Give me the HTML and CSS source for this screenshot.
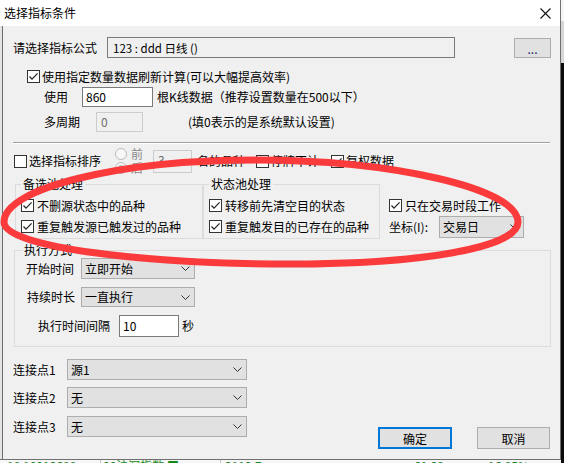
FILE: index.html
```html
<!DOCTYPE html>
<html lang="zh-CN">
<head>
<meta charset="utf-8">
<title>选择指标条件</title>
<link rel="stylesheet" href="styles.css">
</head>
<body>
<div class="screen">
  <div class="dialog">
    <div class="titlebar">
      <span class="title">选择指标条件</span>
      <svg class="close" width="11" height="11" viewBox="0 0 11 11"><path d="M0.5 0.5 L10.5 10.5 M10.5 0.5 L0.5 10.5" stroke="#111" stroke-width="1.1" fill="none"/></svg>
    </div>
    <div class="content">
      <div class="row r-formula">
        <span class="w-formula">请选择指标公式</span>
        <div class="field readonly formula">123 : ddd 日线 ()</div>
        <div class="btn dots">...</div>
      </div>

      <div class="row r-refresh">
        <span class="cb"><svg width="11" height="11" viewBox="0 0 11 11"><polyline points="1.5,5.5 4,8.2 9.6,2.4" fill="none" stroke="#222" stroke-width="1.2"/></svg></span>
        <span class="cbtext">使用指定数量数据刷新计算(可以大幅提高效率)</span>
      </div>

      <div class="row r-use">
        <span class="w-use">使用</span>
        <div class="field in-860">860</div>
        <span class="after-860">根K线数据（推荐设置数量在500以下）</span>
      </div>

      <div class="row r-multi">
        <span class="w-multi">多周期</span>
        <div class="field disabled in-0">0</div>
        <span class="after-0">(填0表示的是系统默认设置)</span>
      </div>

      <div class="sep"></div>

      <div class="row r-sort">
        <span class="cb"></span>
        <span class="cbtext">选择指标排序</span>
        <div class="radios">
          <div class="ropt"><span class="radio"></span><span class="rtext">前</span></div>
          <div class="ropt"><span class="radio on"></span><span class="rtext">后</span></div>
        </div>
        <div class="field disabled in-3">3</div>
        <span class="after-3">名的品种</span>
        <span class="cb cb-stop"></span>
        <span class="cbtext">停牌不计</span>
        <span class="cb cb-fq"><svg width="11" height="11" viewBox="0 0 11 11"><polyline points="1.5,5.5 4,8.2 9.6,2.4" fill="none" stroke="#222" stroke-width="1.2"/></svg></span>
        <span class="cbtext">复权数据</span>
      </div>

      <div class="groups">
        <fieldset class="group g1">
          <legend>备选池处理</legend>
          <div class="row grow">
            <span class="cb"><svg width="11" height="11" viewBox="0 0 11 11"><polyline points="1.5,5.5 4,8.2 9.6,2.4" fill="none" stroke="#222" stroke-width="1.2"/></svg></span>
            <span class="cbtext">不删源状态中的品种</span>
          </div>
          <div class="row grow">
            <span class="cb"><svg width="11" height="11" viewBox="0 0 11 11"><polyline points="1.5,5.5 4,8.2 9.6,2.4" fill="none" stroke="#222" stroke-width="1.2"/></svg></span>
            <span class="cbtext">重复触发源已触发过的品种</span>
          </div>
        </fieldset>
        <fieldset class="group g2">
          <legend>状态池处理</legend>
          <div class="row grow">
            <span class="cb"><svg width="11" height="11" viewBox="0 0 11 11"><polyline points="1.5,5.5 4,8.2 9.6,2.4" fill="none" stroke="#222" stroke-width="1.2"/></svg></span>
            <span class="cbtext">转移前先清空目的状态</span>
          </div>
          <div class="row grow">
            <span class="cb"><svg width="11" height="11" viewBox="0 0 11 11"><polyline points="1.5,5.5 4,8.2 9.6,2.4" fill="none" stroke="#222" stroke-width="1.2"/></svg></span>
            <span class="cbtext">重复触发目的已存在的品种</span>
          </div>
        </fieldset>
        <div class="rightcol">
          <div class="row grow">
            <span class="cb"><svg width="11" height="11" viewBox="0 0 11 11"><polyline points="1.5,5.5 4,8.2 9.6,2.4" fill="none" stroke="#222" stroke-width="1.2"/></svg></span>
            <span class="cbtext">只在交易时段工作</span>
          </div>
          <div class="row grow">
            <span class="w-coord">坐标(I):</span>
            <div class="combo c-coord"><span>交易日</span><svg class="chev" width="9" height="5" viewBox="0 0 9 5"><polyline points="0.5,0.5 4.5,4.5 8.5,0.5" fill="none" stroke="#333" stroke-width="1"/></svg></div>
          </div>
        </div>
      </div>

      <fieldset class="group exec">
        <legend>执行方式</legend>
        <div class="row e1">
          <span class="w-start">开始时间</span>
          <div class="combo c-exec"><span>立即开始</span><svg class="chev" width="9" height="5" viewBox="0 0 9 5"><polyline points="0.5,0.5 4.5,4.5 8.5,0.5" fill="none" stroke="#333" stroke-width="1"/></svg></div>
        </div>
        <div class="row e2">
          <span class="w-dur">持续时长</span>
          <div class="combo c-exec"><span>一直执行</span><svg class="chev" width="9" height="5" viewBox="0 0 9 5"><polyline points="0.5,0.5 4.5,4.5 8.5,0.5" fill="none" stroke="#333" stroke-width="1"/></svg></div>
        </div>
        <div class="row e3">
          <span class="w-int">执行时间间隔</span>
          <div class="field in-10">10</div>
          <span class="after-10">秒</span>
        </div>
      </fieldset>

      <div class="bottom">
        <div class="conns">
          <div class="row conn">
            <span class="w-conn">连接点1</span>
            <div class="combo c-conn"><span>源1</span><svg class="chev" width="9" height="5" viewBox="0 0 9 5"><polyline points="0.5,0.5 4.5,4.5 8.5,0.5" fill="none" stroke="#333" stroke-width="1"/></svg></div>
          </div>
          <div class="row conn c2">
            <span class="w-conn">连接点2</span>
            <div class="combo c-conn"><span>无</span><svg class="chev" width="9" height="5" viewBox="0 0 9 5"><polyline points="0.5,0.5 4.5,4.5 8.5,0.5" fill="none" stroke="#333" stroke-width="1"/></svg></div>
          </div>
          <div class="row conn c3">
            <span class="w-conn">连接点3</span>
            <div class="combo c-conn"><span>无</span><svg class="chev" width="9" height="5" viewBox="0 0 9 5"><polyline points="0.5,0.5 4.5,4.5 8.5,0.5" fill="none" stroke="#333" stroke-width="1"/></svg></div>
          </div>
        </div>
        <div class="buttons">
          <div class="btn ok">确定</div>
          <div class="btn cancel">取消</div>
        </div>
      </div>
    </div>
  </div>
  <div class="bgapp">
    <span class="g a">18 10013688</span>
    <span class="g b">00沪深指数 ■</span>
    <span class="g c">3113.7</span>
    <span class="g d">61.39</span>
    <span class="g e">16.85%</span>
  </div>
  <svg class="annot" width="564" height="463" viewBox="0 0 564 463">
    <path d="M 4 222 C 4 188, 120 160, 255 160 C 390 160, 518 188, 518 222 C 518 248, 420 264, 290 264 C 150 264, 4 248, 4 222 Z" fill="none" stroke="#fb3a3c" stroke-width="7"/>
  </svg>
</div>
</body>
</html>
```

FILE: styles.css
```css
* { box-sizing: border-box; }
html, body { margin: 0; padding: 0; }
body {
  width: 564px;
  height: 463px;
  overflow: hidden;
  background: linear-gradient(to bottom, #f6f6f6 0 21px, #d6d6d6 21px 63px, #0b0b0b 63px);
  font-family: "Noto Sans CJK SC", "Microsoft YaHei", sans-serif;
  font-size: 12px;
  color: #000;
}
.screen { position: relative; width: 564px; height: 463px; }

.dialog {
  width: 561px;
  height: 460px;
  border-right: 1px solid #707070;
  border-bottom: 1px solid #707070;
  display: flex;
  flex-direction: column;
  background: #f0f0f0;
}
.titlebar {
  height: 26px;
  flex: none;
  background: #fff;
  display: flex;
  align-items: center;
  padding-left: 4px;
}
.title { line-height: 14px; }
.close { margin-left: auto; margin-right: 9px; display: block; }

.content {
  flex: 1;
  display: flex;
  flex-direction: column;
  padding: 0 10px 0 13px;
  background: linear-gradient(to right, #e4e4e4 0 2px, #6b6b6b 2px 3px, #f0f0f0 3px);
}
.row {
  display: flex;
  align-items: center;
  flex: none;
  white-space: nowrap;
  line-height: 14px;
}

/* generic controls */
.field {
  display: flex;
  align-items: center;
  height: 20px;
  border: 1px solid #7a7a7a;
  background: #fff;
  padding-left: 3px;
  flex: none;
}
.field.readonly { background: #f0f0f0; }
.field.disabled { border-color: #cccccc; background: #f0f0f0; color: #6d6d6d; }
.btn {
  display: flex;
  align-items: center;
  justify-content: center;
  background: #e1e1e1;
  border: 1px solid #adadad;
  flex: none;
}
.combo {
  display: flex;
  align-items: center;
  background: #e1e1e1;
  border: 1px solid #adadad;
  padding-left: 3px;
  flex: none;
}
.chev { margin-left: auto; margin-right: 4px; display: block; }
.cb {
  width: 13px;
  height: 13px;
  border: 1px solid #333;
  background: #fff;
  flex: none;
  display: flex;
}
.cb svg { display: block; }
.cbtext { margin-left: 2px; flex: none; }
.radio {
  width: 12px;
  height: 12px;
  border-radius: 50%;
  border: 1px solid #bcbcbc;
  background: #f7f7f7;
  flex: none;
  display: flex;
  align-items: center;
  justify-content: center;
}
.radio.on::after {
  content: "";
  width: 6px;
  height: 6px;
  border-radius: 50%;
  background: #c0c0c0;
}

/* formula row */
.r-formula { margin-top: 11px; height: 21px; }
.w-formula { width: 94px; flex: none; }
.formula { width: 348px; height: 21px; padding-left: 5px; font-size: 11.5px; }
.dots { width: 37px; height: 20px; margin-left: 59px; color: #1b1b6b; font-size: 12px; line-height: 12px; padding-top: 2px; }

.r-refresh { margin-top: 8px; height: 21px; padding-left: 14px; }

.r-use { height: 20px; padding-left: 31px; }
.w-use { width: 38px; flex: none; }
.in-860 { width: 71px; }
.after-860 { margin-left: 4px; }

.r-multi { margin-top: 5px; height: 20px; padding-left: 31px; }
.w-multi { width: 52px; flex: none; }
.in-0 { width: 47px; padding-left: 4px; }
.after-0 { margin-left: 45px; }

.sep {
  margin-top: 10px;
  height: 2px;
  border-top: 1px solid #a0a0a0;
  border-bottom: 1px solid #ffffff;
  flex: none;
}

/* sort row */
.r-sort { margin-top: 4px; height: 26px; padding-left: 1px; }
.radios { margin-left: 14px; display: flex; flex-direction: column; gap: 2px; flex: none; }
.ropt { display: flex; align-items: center; height: 12px; line-height: 12px; }
.rtext { margin-left: 4px; color: #8a8a8a; }
.in-3 { width: 39px; height: 23px; margin-left: 10px; padding-left: 4px; align-items: flex-start; padding-top: 2px; }
.after-3 { margin-left: 5px; flex: none; }
.cb-stop { margin-left: 11px; }
.cb-fq { margin-left: 12px; }

/* groups */
.groups { display: flex; margin-top: 3px; padding-left: 2px; flex: none; }
fieldset.group {
  margin: 0;
  border: 1px solid #dcdcdc;
  padding: 4px 0 1px 5px;
  min-width: 0;
  flex: none;
}
fieldset.group legend {
  padding: 0 2px;
  line-height: 14px;
  font-size: 12px;
}
.g1 { width: 188px; }
.g2 { width: 177px; margin-left: 4px; }
.grow { height: 21px; }
.grow .cbtext { margin-left: 3px; }
.rightcol { margin-left: 9px; padding-top: 18px; display: flex; flex-direction: column; flex: none; }
.w-coord { width: 50px; flex: none; }
.c-coord { width: 85px; height: 22px; padding-left: 3px; }

/* exec group */
fieldset.exec {
  margin-top: 4px;
  margin-left: 1px;
  width: 537px;
  padding: 1px 0 9px 11px;
  flex: none;
}
fieldset.exec legend { padding: 0 1px; margin-left: -3px; }
.e1 { height: 21px; }
.e2 { height: 20px; margin-top: 8px; padding-left: 1px; }
.e3 { height: 22px; margin-top: 8px; padding-left: 12px; }
.w-start { width: 55px; flex: none; }
.w-dur { width: 54px; flex: none; }
.c-exec { width: 114px; height: 100%; }
.w-int { width: 81px; flex: none; }
.in-10 { width: 60px; height: 22px; }
.after-10 { margin-left: 3px; }

/* bottom */
.bottom { flex: 1; display: flex; }
.conns { padding-top: 12px; display: flex; flex-direction: column; }
.conn { height: 21px; }
.c2 { margin-top: 7px; }
.c3 { margin-top: 8px; }
.w-conn { width: 54px; flex: none; }
.c-conn { width: 180px; height: 21px; }
.buttons { margin-left: auto; align-self: flex-end; margin-bottom: 10px; display: flex; gap: 25px; }
.ok { width: 74px; height: 22px; border: 2px solid #0078d7; }
.cancel { width: 73px; height: 22px; }

/* background app strip under the dialog */
.bgapp {
  width: 561px;
  height: 3px;
  overflow: hidden;
  background: #f7f7f7;
  display: flex;
  font-size: 12px;
  line-height: 12px;
}
.bgapp .g { color: #17861a; flex: none; }
.bgapp .a { margin-left: 7px; width: 90px; }
.bgapp .b { margin-left: 3px; width: 120px; border-left: 1px solid #c8c8c8; padding-left: 2px; }
.bgapp .c { width: 190px; border-left: 1px solid #c8c8c8; padding-left: 4px; }
.bgapp .d { width: 70px; padding-left: 4px; }
.bgapp .e { padding-left: 8px; }

/* hand-drawn red annotation over the dialog */
.annot { position: absolute; left: 0; top: 0; pointer-events: none; }
```
